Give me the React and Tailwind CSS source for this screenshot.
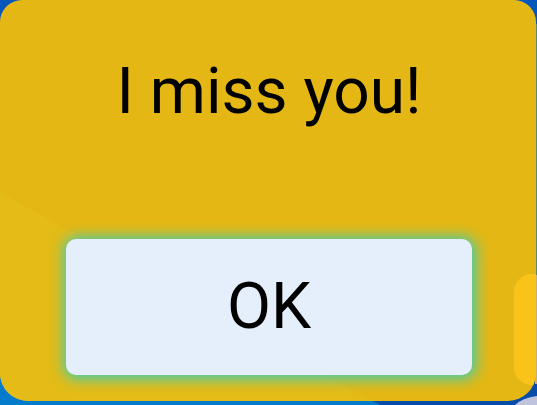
function Backdrop() {
  return (
    <svg
      className="absolute inset-0 h-full w-full"
      viewBox="0 0 537 405"
      preserveAspectRatio="none"
      aria-hidden="true"
    >
      <defs>
        <linearGradient id="sky" x1="0" y1="0" x2="0" y2="1">
          <stop offset="0" stopColor="#0556bd" />
          <stop offset="1" stopColor="#084caa" />
        </linearGradient>
      </defs>
      <rect width="537" height="405" fill="url(#sky)" />
      <path d="M0 192L380 405H0Z" fill="#057bcb" />
      <path d="M535 24H537V275H535Z" fill="#64866c" />
      <path d="M535 275H537V384H535Z" fill="#c9b267" />
      <path d="M515 405Q522 398 537 396V405Z" fill="#bfc4dc" />
    </svg>
  );
}

function CardTexture() {
  return (
    <svg
      className="absolute inset-0 h-full w-full"
      viewBox="0 0 536 401"
      preserveAspectRatio="none"
      aria-hidden="true"
    >
      <path d="M0 192L372 401H0Z" fill="#e4bb17" />
      <rect x="514" y="274" width="60" height="111" rx="18" fill="#fac31a" />
    </svg>
  );
}

export default function App() {
  return (
    <main className="relative flex min-h-screen overflow-hidden pr-px pb-1 font-[Roboto,sans-serif] text-black">
      <Backdrop />
      <section
        role="dialog"
        aria-labelledby="message"
        className="relative flex flex-1 flex-col items-center justify-between overflow-hidden rounded-t-[22px] rounded-b-[28px] bg-[#e4b714] pt-12 pr-16 pb-[26px] pl-[66px]"
      >
        <CardTexture />
        <h1 id="message" className="relative text-[64px] leading-[88px] font-normal">
          I miss you!
        </h1>
        <button
          type="button"
          className="relative h-[136px] w-full max-w-[406px] rounded-[10px] bg-[#e5effb] text-[64px] leading-none shadow-[1px_1px_14px_3px_#3ccfb4]"
        >
          OK
        </button>
      </section>
    </main>
  );
}
